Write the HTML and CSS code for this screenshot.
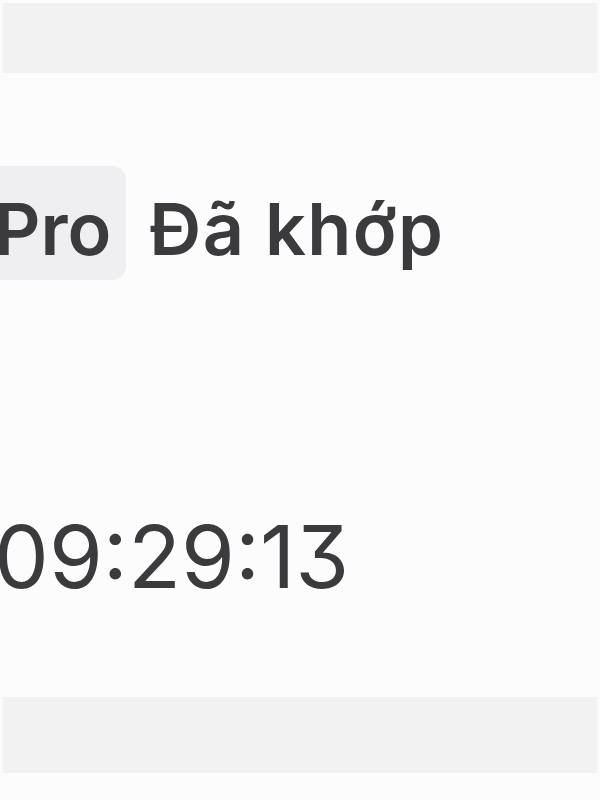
FILE: index.html
```html
<!DOCTYPE html>
<html lang="vi">
<head>
<meta charset="utf-8">
<link rel="stylesheet" href="styles.css">
</head>
<body>
<div class="page">
  <div class="band band-top"></div>
  <div class="row">
    <div class="tags">
      <span class="badge">Pro</span>
      <span class="status">Đã khớp</span>
    </div>
    <div class="time">09:29:13</div>
  </div>
  <div class="band band-bottom"></div>
</div>
</body>
</html>
```
FILE: styles.css
```css
html, body {
  margin: 0;
  padding: 0;
  background: #fcfcfc;
}
.page {
  width: 600px;
  height: 800px;
  overflow: hidden;
  padding-top: 3px;
  box-sizing: border-box;
  font-family: Inter, "Noto Sans", sans-serif;
  color: #3b3b3d;
}
.band {
  background: #f2f2f2;
  border-left: 2px solid #f5f5f5;
  border-right: 2px solid #f5f5f5;
  margin: 0 2px;
}
.band-top {
  height: 70px;
}
.band-bottom {
  height: 76px;
}
.row {
  height: 624px;
  box-sizing: border-box;
  padding-top: 93px;
}
.tags {
  display: flex;
  align-items: flex-start;
  gap: 23px;
  margin-left: -22px;
}
.badge {
  display: block;
  height: 114px;
  box-sizing: border-box;
  padding: 27px 15px 15px 16px;
  background: #efeff1;
  border-radius: 14px;
  font-size: 72px;
  line-height: 1;
  font-weight: 600;
}
.status {
  display: block;
  padding-top: 27px;
  font-size: 72px;
  line-height: 1;
  font-weight: 600;
  letter-spacing: 1.4px;
}
.time {
  margin-top: 233px;
  margin-left: -6px;
  font-size: 87px;
  line-height: 1;
  font-weight: 400;
  font-feature-settings: "cv09";
  letter-spacing: 0;
}
```
